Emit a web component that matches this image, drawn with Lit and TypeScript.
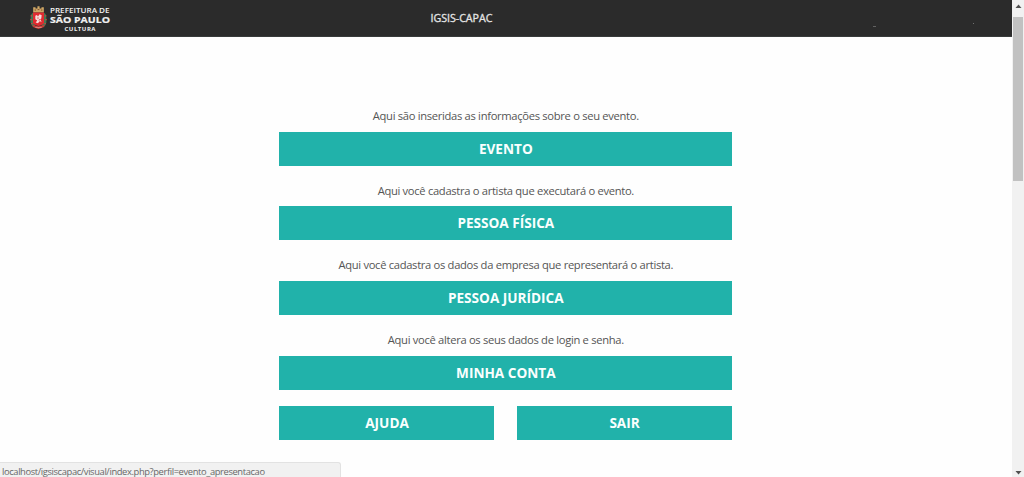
import { LitElement, html, css, svg } from "lit";
import { customElement } from "lit/decorators.js";

const sections = [
  { hint: "Aqui são inseridas as informações sobre o seu evento.", label: "EVENTO" },
  { hint: "Aqui você cadastra o artista que executará o evento.", label: "PESSOA FÍSICA" },
  { hint: "Aqui você cadastra os dados da empresa que representará o artista.", label: "PESSOA JURÍDICA" },
  { hint: "Aqui você altera os seus dados de login e senha.", label: "MINHA CONTA" },
];

// City coat of arms: mural crown, red shield with a white arm, laurel branches and ribbon.
const crest = svg`
  <path d="M3 6 1.200 7.500.6 11 .6 15 2 18.500 4 19.500 5 18 3 14Z" fill="#3f7a55"/>
  <path d="M13 6 14.800 7.500 15.400 11 15.400 15 14 18.500 12 19.500 11 18 13 14Z" fill="#3f7a55"/>
  <path d="M.5 9h1.500M.2 12.500h1.500M1 16h1.500M14 9h1.500M14.300 12.500h1.500M13.500 16h1.500" stroke="#c04a42" stroke-width="1.100"/>
  <path d="M3 1.200h2.200v1H7V.3h2v1.900h1.800v-1H13v4.800H3Z" fill="#cfa765"/>
  <path d="M4.300 3.700h1.400M7.200 3.300h1.600M10.300 3.700h1.400" stroke="#7b4a30" stroke-width=".9"/>
  <path d="M2.800 6h10.400v9.500q-1 2-5.200 2.800-4.200-.8-5.200-2.800Z" fill="#e02b30"/>
  <path d="M5 9 6.500 8.200 7.500 9.500 9 7.500 11 8.500 10.600 11.300 9.600 12 11 14.300 9 14 7.500 15.800 5.300 15 6.800 13.300 5 12Z" fill="#f5dcda"/>
  <path d="M6.800 11h1.400M8.200 13l1.200-.6" stroke="#e02b30" stroke-width=".8"/>
  <path d="M2.200 17.200 8 18.800l5.800-1.600-1 2.200L8 20.900 3.200 19.400Z" fill="#c93a36"/>
  <path d="M5 19.500h6" stroke="#e8b8ac" stroke-width=".6"/>`;

@customElement("app-root")
export class AppRoot extends LitElement {
  static styles = css`
    :host {
      display: block;
      position: relative;
      height: 477px;
      overflow: hidden;
      background: #fefefe;
      font-family: "Open Sans", sans-serif;
    }
    .window { display: flex; height: 100%; }
    .page { flex: 1; min-width: 0; }
    .topbar {
      box-sizing: border-box;
      height: 37px;
      background: #2b2b2b;
      border-bottom: 1px solid #383b3b;
      display: grid;
      grid-template-columns: 430.500px 1fr 139px;
      align-items: start;
    }
    .brand { display: flex; padding: 6px 0 0 30px; gap: 3px; }
    .crest { width: 17px; height: 23px; display: block; }
    .wordmark { width: 62px; height: 27px; display: block; overflow: visible; }
    .title {
      font-size: 10.700px;
      line-height: 16px;
      padding-top: 10px;
      color: #e4e4e4;
      letter-spacing: -0.04px;
      -webkit-text-stroke: 0.3px #e4e4e4;
    }
    .specks { display: grid; grid-template-columns: 100px 1fr; }
    .speck { width: 3px; height: 1px; margin-top: 26px; background: #626262; }
    .speck.small { width: 1px; margin-top: 23px; background: #707070; }
    .menu {
      width: 452.500px;
      margin: 0 0 0 279.300px;
      padding-top: 69.200px;
    }
    .section { height: 74.600px; text-align: center; }
    .hint {
      margin: 0;
      height: 25.600px;
      line-height: 20px;
      font-size: 11.200px;
      letter-spacing: -0.310px;
      color: #555;
      white-space: nowrap;
      padding-left: 0.500px;
      box-sizing: border-box;
    }
    .button {
      box-sizing: border-box;
      display: block;
      width: 100%;
      height: 34px;
      margin: 0;
      padding: 0 0 0 0.500px;
      border: 0;
      background: #21b2aa;
      color: #fafffe;
      font: 700 13.600px/34px "Open Sans", sans-serif;
      text-align: center;
    }
    .pair {
      display: grid;
      grid-template-columns: 215px 215px;
      justify-content: space-between;
      margin-top: 1.200px;
    }
    .scrollbar {
      width: 12px;
      background: #f1f1f1;
      display: grid;
      grid-template-rows: 17px 164px 1fr 17px;
    }
    .arrow { width: 12px; height: 17px; display: block; }
    .thumb { margin: 0 1px; background: #c1c1c1; }
    .status {
      position: absolute;
      left: 0;
      bottom: 0;
      box-sizing: border-box;
      width: 341px;
      height: 15px;
      padding-left: 2px;
      border: 1px solid #e2e2e2;
      border-width: 1px 1px 0 0;
      border-radius: 0 3px 0 0;
      background: #f1f1f1;
      color: #686868;
      font: 9.400px/17px "Open Sans", sans-serif;
      letter-spacing: -0.390px;
      white-space: nowrap;
    }
  `;

  render() {
    return html`
      <div class="window">
        <div class="page">
          <header class="topbar">
            <div class="brand">
              <svg class="crest" viewBox="0 0 16 21" preserveAspectRatio="none">${crest}</svg>
              <svg class="wordmark" viewBox="0 0 62 27" font-family="Open Sans, sans-serif" fill="#f1f1f1">
                <text x="0" y="6.600" font-size="7" font-weight="600" textLength="59.500" lengthAdjust="spacingAndGlyphs">PREFEITURA DE</text>
                <text x="0" y="17" font-size="9" font-weight="700" textLength="60" lengthAdjust="spacingAndGlyphs" stroke="#f1f1f1" stroke-width=".2">SÃO PAULO</text>
                <text x="14.500" y="24.600" font-size="6" font-weight="700" textLength="31" lengthAdjust="spacing">CULTURA</text>
              </svg>
            </div>
            <div class="title">IGSIS-CAPAC</div>
            <div class="specks">
              <i class="speck"></i>
              <i class="speck small"></i>
            </div>
          </header>
          <main class="menu">
            ${sections.map(
              (s) => html`<section class="section">
                <p class="hint">${s.hint}</p>
                <button class="button">${s.label}</button>
              </section>`
            )}
            <div class="pair">
              <button class="button">AJUDA</button>
              <button class="button">SAIR</button>
            </div>
          </main>
        </div>
        <div class="scrollbar">
          <svg class="arrow" viewBox="0 0 12 17"><path d="M3.500 8 6.500 4.500 9.500 8Z" fill="#505050"/></svg>
          <div class="thumb"></div>
          <div></div>
          <svg class="arrow" viewBox="0 0 12 17"><path d="M3.500 11 6.500 14.500 9.500 11Z" fill="#505050"/></svg>
        </div>
      </div>
      <div class="status">localhost/igsiscapac/visual/index.php?perfil=evento_apresentacao</div>
    `;
  }
}
